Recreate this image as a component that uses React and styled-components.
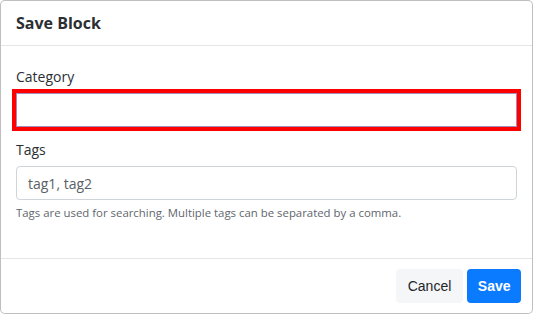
import React from "react";
import styled, { createGlobalStyle } from "styled-components";

const GlobalStyle = createGlobalStyle`
  html, body {
    margin: 0;
    padding: 0;
    background: #ffffff;
  }
  * {
    box-sizing: border-box;
  }
`;

const Modal = styled.div`
  width: 533px;
  height: 314px;
  display: flex;
  flex-direction: column;
  background: #fff;
  border: 1px solid rgba(0, 0, 0, 0.25);
  border-radius: 5px;
  font-family: "Open Sans", "Noto Sans", sans-serif;
  color: #212529;
  overflow: hidden;
`;

const Header = styled.div`
  padding: 10px 15px;
  border-bottom: 1px solid #e3e6e9;
`;

const Title = styled.h5`
  margin: 0;
  font-size: 16px;
  font-weight: 700;
  line-height: 24px;
  color: #2b2f33;
`;

const Body = styled.div`
  flex: 1;
  padding: 20px 15px 0;
`;

const FormGroup = styled.div`
  margin-bottom: 12px;
`;

const Label = styled.label`
  display: block;
  font-size: 14px;
  line-height: 21px;
  margin-bottom: 6px;
  color: #2b2f33;
`;

const Input = styled.input`
  display: block;
  width: 100%;
  height: 34px;
  padding: 6px 11px;
  font-family: inherit;
  font-size: 14px;
  color: #495057;
  background: #fff;
  border: 1px solid ${(p) => (p.$highlight ? "#a58bb8" : "#ced4da")};
  border-radius: ${(p) => (p.$highlight ? "0" : "4px")};
  outline: ${(p) => (p.$highlight ? "4px solid #ff0000" : "none")};
  outline-offset: 0;

  &::placeholder {
    color: #5a6066;
  }
`;

const Help = styled.small`
  display: block;
  margin-top: 4px;
  font-size: 11.4px;
  line-height: 17px;
  color: #5f666d;
`;

const Footer = styled.div`
  display: flex;
  justify-content: flex-end;
  gap: 4px;
  padding: 10px 11px;
  border-top: 1px solid #e3e6e9;
`;

const Button = styled.button`
  height: 34px;
  padding: 0 ${(p) => (p.$primary ? "10.5px" : "12px")};
  font-family: "Liberation Sans", Arial, sans-serif;
  font-size: 14px;
  font-weight: ${(p) => (p.$primary ? 700 : 400)};
  color: ${(p) => (p.$primary ? "#fff" : "#212529")};
  background: ${(p) => (p.$primary ? "#0a7bff" : "#f5f6f8")};
  border: none;
  border-radius: 4px;
  cursor: pointer;
`;

export default function App() {
  return (
    <>
      <GlobalStyle />
      <Modal>
        <Header>
          <Title>Save Block</Title>
        </Header>
        <Body>
          <FormGroup>
            <Label>Category</Label>
            <Input $highlight />
          </FormGroup>
          <FormGroup>
            <Label>Tags</Label>
            <Input placeholder="tag1, tag2" />
            <Help>Tags are used for searching. Multiple tags can be separated by a comma.</Help>
          </FormGroup>
        </Body>
        <Footer>
          <Button>Cancel</Button>
          <Button $primary>Save</Button>
        </Footer>
      </Modal>
    </>
  );
}
